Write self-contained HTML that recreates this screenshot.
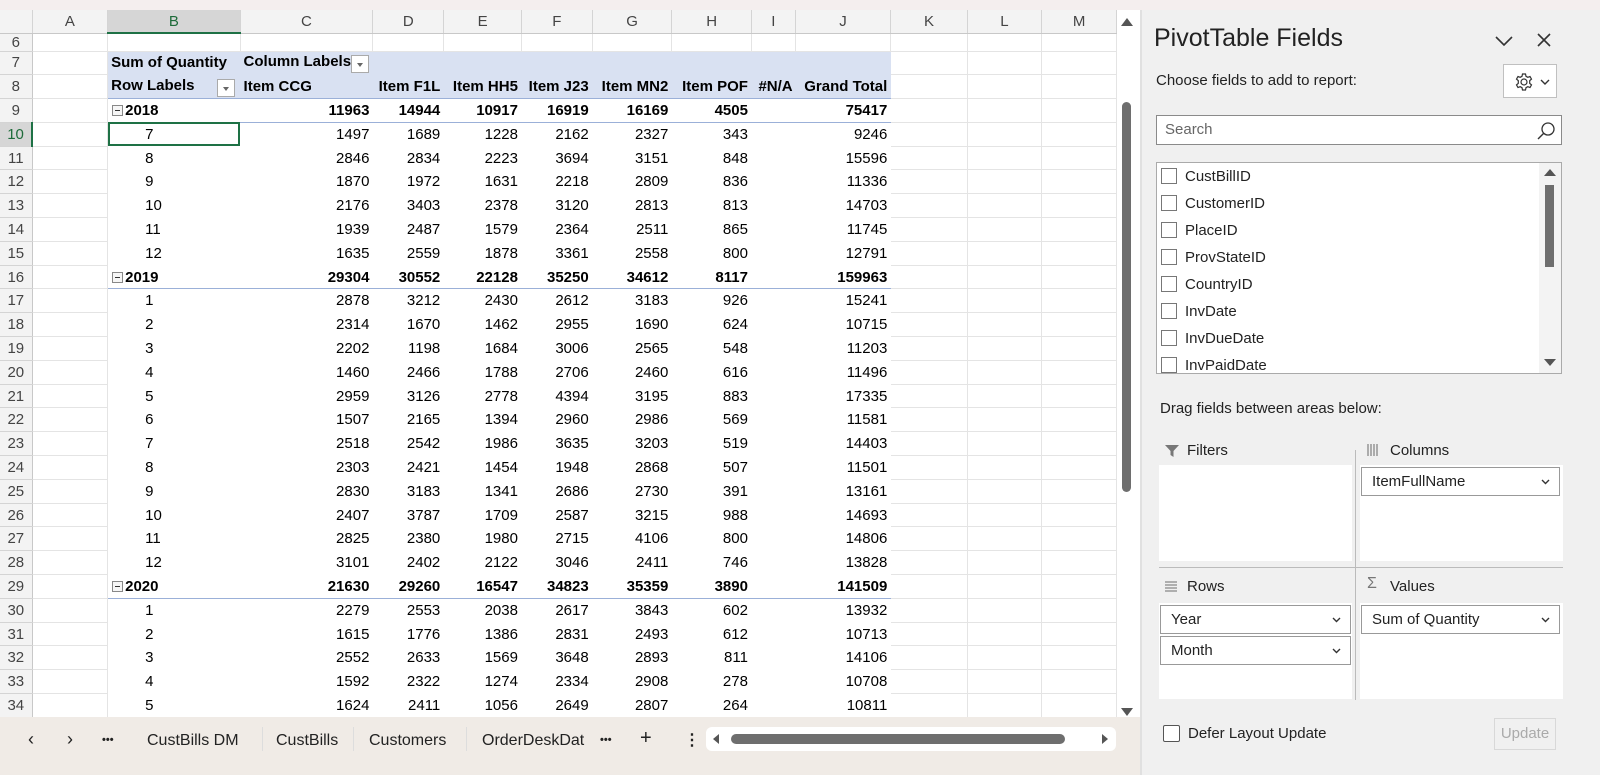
<!DOCTYPE html>
<html><head><meta charset="utf-8">
<style>
*{box-sizing:border-box;margin:0;padding:0}
body{width:1600px;height:775px;overflow:hidden;background:#fff;font-family:"Liberation Sans",Arial,sans-serif;position:relative;color:#000}
.top{position:absolute;left:0;top:0;width:1600px;height:10px;background:#f4eeee}
.grid{position:absolute;left:0;top:10px;width:1117px;height:707px;overflow:hidden;background:#fff}
table{border-collapse:collapse;table-layout:fixed;font-size:15px}
td{height:23.8px;border-right:1px solid #e4e4e4;border-bottom:1px solid #e4e4e4;white-space:nowrap;overflow:hidden;padding:0 3px;text-align:right}
tr.hd td{height:23px;background:#f3f3f3;color:#444;text-align:center;font-size:15px;border-right:1px solid #d4d4d4;border-bottom:1px solid #c8c8c8}
td.rh{background:#f3f3f3;color:#444;text-align:center;font-size:15px;border-right:1px solid #c8c8c8;border-bottom:1px solid #d4d4d4;padding:0}
tr.r6 td{height:16px}
.pv{background:#d9e1f2;border-right-color:#d9e1f2;border-bottom-color:#d9e1f2;font-weight:bold}
.l{text-align:left}
tr.y td.p{font-weight:bold;border-bottom:1px solid #9bb0d8}
tr.y td.p, tr.m td.p{border-right-color:#fff}
tr.m td.p{border-bottom-color:#fff}
.mb{text-align:left;padding-left:37px}
.minus{display:inline-block;width:11px;height:11px;border:1px solid #888;vertical-align:-1px;margin-right:2px;position:relative;background:#f6f6f6}
.minus:after{content:"";position:absolute;left:2px;top:4px;width:5px;height:1px;background:#333}
.dd{display:inline-block;width:18px;height:18px;border:1px solid #aaa;background:#fff;vertical-align:middle;position:relative;float:right;margin-top:2px}
.dd:after{content:"";position:absolute;left:5px;top:7px;border-left:3px solid transparent;border-right:3px solid transparent;border-top:4px solid #666}
.vs{position:absolute;left:1117px;top:10px;width:23px;height:710px;background:#fff}
.tabs{position:absolute;left:0;top:717px;width:1140px;height:58px;background:#f0ebe6;font-size:16px;color:#222}
.tabs span{position:absolute;top:15px}
.panel{position:absolute;left:1140px;top:10px;width:460px;height:765px;background:#f0f0f0;border-left:2px solid #e0e0e0;font-size:15px;color:#222}
.panel .a{position:absolute}
.box{position:absolute;background:#fff;border:1px solid #8a8a8a}
.cb{display:inline-block;width:16px;height:16px;border:1.5px solid #777;background:#fff;vertical-align:-3px;margin-right:8px}
.fld{position:absolute;left:0;height:27px;line-height:27px;padding-left:4px;font-size:15px}
.pill{position:absolute;background:#fff;border:1px solid #999;height:29px;line-height:27px;padding-left:10px;font-size:15px}
.pill svg{position:absolute;right:9px;top:11px}
.area{position:absolute;background:#fff}
</style></head><body>
<div class="top"></div>
<div class="grid">
<table>
<colgroup><col style="width:33px"><col style="width:79px"><col style="width:133px"><col style="width:134px"><col style="width:71px"><col style="width:78px"><col style="width:71px"><col style="width:80px"><col style="width:80px"><col style="width:44px"><col style="width:96px"><col style="width:80px"><col style="width:78px"><col style="width:78px"></colgroup>
<tr class="hd"><td style="background:#f3f3f3"></td><td>A</td><td style="background:#d6d6d6;color:#1e6b3a;border-bottom:2px solid #1e7145">B</td><td>C</td><td>D</td><td>E</td><td>F</td><td>G</td><td>H</td><td>I</td><td>J</td><td>K</td><td>L</td><td>M</td></tr>
<tr class="r6"><td class="rh">6</td><td></td><td></td><td></td><td></td><td></td><td></td><td></td><td></td><td></td><td></td><td></td><td></td><td></td></tr>
<tr><td class="rh">7</td><td></td><td class="pv l">Sum of Quantity</td><td class="pv l">Column Labels<span class="dd"></span></td><td class="pv"></td><td class="pv"></td><td class="pv"></td><td class="pv"></td><td class="pv"></td><td class="pv"></td><td class="pv"></td><td></td><td></td><td></td></tr>
<tr><td class="rh">8</td><td></td><td class="pv l" style="border-bottom:1px solid #9bb0d8">Row Labels<span class="dd" style="margin-right:2px"></span></td><td class="pv l" style="border-bottom:1px solid #9bb0d8">Item CCG</td><td class="pv" style="border-bottom:1px solid #9bb0d8">Item F1L</td><td class="pv" style="border-bottom:1px solid #9bb0d8">Item HH5</td><td class="pv" style="border-bottom:1px solid #9bb0d8">Item J23</td><td class="pv" style="border-bottom:1px solid #9bb0d8">Item MN2</td><td class="pv" style="border-bottom:1px solid #9bb0d8">Item POF</td><td class="pv" style="border-bottom:1px solid #9bb0d8;padding:0 2px">#N/A</td><td class="pv" style="border-bottom:1px solid #9bb0d8">Grand Total</td><td></td><td></td><td></td></tr>
<tr class="y"><td class="rh">9</td><td></td><td class="p l" style="padding-left:4px"><span class="minus"></span>2018</td><td class="p">11963</td><td class="p">14944</td><td class="p">10917</td><td class="p">16919</td><td class="p">16169</td><td class="p">4505</td><td class="p"></td><td class="p">75417</td><td></td><td></td><td></td></tr>
<tr class="m"><td class="rh" style="background:#d6d6d6;color:#1e6b3a;border-right:2px solid #1e7145">10</td><td></td><td class="p mb" style="outline:2px solid #1e7145;outline-offset:-2px">7</td><td class="p">1497</td><td class="p">1689</td><td class="p">1228</td><td class="p">2162</td><td class="p">2327</td><td class="p">343</td><td class="p"></td><td class="p">9246</td><td></td><td></td><td></td></tr>
<tr class="m"><td class="rh">11</td><td></td><td class="p mb">8</td><td class="p">2846</td><td class="p">2834</td><td class="p">2223</td><td class="p">3694</td><td class="p">3151</td><td class="p">848</td><td class="p"></td><td class="p">15596</td><td></td><td></td><td></td></tr>
<tr class="m"><td class="rh">12</td><td></td><td class="p mb">9</td><td class="p">1870</td><td class="p">1972</td><td class="p">1631</td><td class="p">2218</td><td class="p">2809</td><td class="p">836</td><td class="p"></td><td class="p">11336</td><td></td><td></td><td></td></tr>
<tr class="m"><td class="rh">13</td><td></td><td class="p mb">10</td><td class="p">2176</td><td class="p">3403</td><td class="p">2378</td><td class="p">3120</td><td class="p">2813</td><td class="p">813</td><td class="p"></td><td class="p">14703</td><td></td><td></td><td></td></tr>
<tr class="m"><td class="rh">14</td><td></td><td class="p mb">11</td><td class="p">1939</td><td class="p">2487</td><td class="p">1579</td><td class="p">2364</td><td class="p">2511</td><td class="p">865</td><td class="p"></td><td class="p">11745</td><td></td><td></td><td></td></tr>
<tr class="m"><td class="rh">15</td><td></td><td class="p mb">12</td><td class="p">1635</td><td class="p">2559</td><td class="p">1878</td><td class="p">3361</td><td class="p">2558</td><td class="p">800</td><td class="p"></td><td class="p">12791</td><td></td><td></td><td></td></tr>
<tr class="y"><td class="rh">16</td><td></td><td class="p l" style="padding-left:4px"><span class="minus"></span>2019</td><td class="p">29304</td><td class="p">30552</td><td class="p">22128</td><td class="p">35250</td><td class="p">34612</td><td class="p">8117</td><td class="p"></td><td class="p">159963</td><td></td><td></td><td></td></tr>
<tr class="m"><td class="rh">17</td><td></td><td class="p mb">1</td><td class="p">2878</td><td class="p">3212</td><td class="p">2430</td><td class="p">2612</td><td class="p">3183</td><td class="p">926</td><td class="p"></td><td class="p">15241</td><td></td><td></td><td></td></tr>
<tr class="m"><td class="rh">18</td><td></td><td class="p mb">2</td><td class="p">2314</td><td class="p">1670</td><td class="p">1462</td><td class="p">2955</td><td class="p">1690</td><td class="p">624</td><td class="p"></td><td class="p">10715</td><td></td><td></td><td></td></tr>
<tr class="m"><td class="rh">19</td><td></td><td class="p mb">3</td><td class="p">2202</td><td class="p">1198</td><td class="p">1684</td><td class="p">3006</td><td class="p">2565</td><td class="p">548</td><td class="p"></td><td class="p">11203</td><td></td><td></td><td></td></tr>
<tr class="m"><td class="rh">20</td><td></td><td class="p mb">4</td><td class="p">1460</td><td class="p">2466</td><td class="p">1788</td><td class="p">2706</td><td class="p">2460</td><td class="p">616</td><td class="p"></td><td class="p">11496</td><td></td><td></td><td></td></tr>
<tr class="m"><td class="rh">21</td><td></td><td class="p mb">5</td><td class="p">2959</td><td class="p">3126</td><td class="p">2778</td><td class="p">4394</td><td class="p">3195</td><td class="p">883</td><td class="p"></td><td class="p">17335</td><td></td><td></td><td></td></tr>
<tr class="m"><td class="rh">22</td><td></td><td class="p mb">6</td><td class="p">1507</td><td class="p">2165</td><td class="p">1394</td><td class="p">2960</td><td class="p">2986</td><td class="p">569</td><td class="p"></td><td class="p">11581</td><td></td><td></td><td></td></tr>
<tr class="m"><td class="rh">23</td><td></td><td class="p mb">7</td><td class="p">2518</td><td class="p">2542</td><td class="p">1986</td><td class="p">3635</td><td class="p">3203</td><td class="p">519</td><td class="p"></td><td class="p">14403</td><td></td><td></td><td></td></tr>
<tr class="m"><td class="rh">24</td><td></td><td class="p mb">8</td><td class="p">2303</td><td class="p">2421</td><td class="p">1454</td><td class="p">1948</td><td class="p">2868</td><td class="p">507</td><td class="p"></td><td class="p">11501</td><td></td><td></td><td></td></tr>
<tr class="m"><td class="rh">25</td><td></td><td class="p mb">9</td><td class="p">2830</td><td class="p">3183</td><td class="p">1341</td><td class="p">2686</td><td class="p">2730</td><td class="p">391</td><td class="p"></td><td class="p">13161</td><td></td><td></td><td></td></tr>
<tr class="m"><td class="rh">26</td><td></td><td class="p mb">10</td><td class="p">2407</td><td class="p">3787</td><td class="p">1709</td><td class="p">2587</td><td class="p">3215</td><td class="p">988</td><td class="p"></td><td class="p">14693</td><td></td><td></td><td></td></tr>
<tr class="m"><td class="rh">27</td><td></td><td class="p mb">11</td><td class="p">2825</td><td class="p">2380</td><td class="p">1980</td><td class="p">2715</td><td class="p">4106</td><td class="p">800</td><td class="p"></td><td class="p">14806</td><td></td><td></td><td></td></tr>
<tr class="m"><td class="rh">28</td><td></td><td class="p mb">12</td><td class="p">3101</td><td class="p">2402</td><td class="p">2122</td><td class="p">3046</td><td class="p">2411</td><td class="p">746</td><td class="p"></td><td class="p">13828</td><td></td><td></td><td></td></tr>
<tr class="y"><td class="rh">29</td><td></td><td class="p l" style="padding-left:4px"><span class="minus"></span>2020</td><td class="p">21630</td><td class="p">29260</td><td class="p">16547</td><td class="p">34823</td><td class="p">35359</td><td class="p">3890</td><td class="p"></td><td class="p">141509</td><td></td><td></td><td></td></tr>
<tr class="m"><td class="rh">30</td><td></td><td class="p mb">1</td><td class="p">2279</td><td class="p">2553</td><td class="p">2038</td><td class="p">2617</td><td class="p">3843</td><td class="p">602</td><td class="p"></td><td class="p">13932</td><td></td><td></td><td></td></tr>
<tr class="m"><td class="rh">31</td><td></td><td class="p mb">2</td><td class="p">1615</td><td class="p">1776</td><td class="p">1386</td><td class="p">2831</td><td class="p">2493</td><td class="p">612</td><td class="p"></td><td class="p">10713</td><td></td><td></td><td></td></tr>
<tr class="m"><td class="rh">32</td><td></td><td class="p mb">3</td><td class="p">2552</td><td class="p">2633</td><td class="p">1569</td><td class="p">3648</td><td class="p">2893</td><td class="p">811</td><td class="p"></td><td class="p">14106</td><td></td><td></td><td></td></tr>
<tr class="m"><td class="rh">33</td><td></td><td class="p mb">4</td><td class="p">1592</td><td class="p">2322</td><td class="p">1274</td><td class="p">2334</td><td class="p">2908</td><td class="p">278</td><td class="p"></td><td class="p">10708</td><td></td><td></td><td></td></tr>
<tr class="m"><td class="rh">34</td><td></td><td class="p mb">5</td><td class="p">1624</td><td class="p">2411</td><td class="p">1056</td><td class="p">2649</td><td class="p">2807</td><td class="p">264</td><td class="p"></td><td class="p">10811</td><td></td><td></td><td></td></tr>
<tr class="m"><td class="rh">35</td><td></td><td class="p mb">6</td><td class="p">1778</td><td class="p">2360</td><td class="p">1518</td><td class="p">2553</td><td class="p">2873</td><td class="p">883</td><td class="p"></td><td class="p">12264</td><td></td><td></td><td></td></tr>
</table>
</div>
<div class="vs">
<div style="position:absolute;left:4px;top:8px;border-left:6px solid transparent;border-right:6px solid transparent;border-bottom:8px solid #555"></div>
<div style="position:absolute;left:5px;top:92px;width:9px;height:390px;background:#6e6e6e;border-radius:5px"></div>
<div style="position:absolute;left:4px;top:698px;border-left:6px solid transparent;border-right:6px solid transparent;border-top:8px solid #555"></div>
</div>
<div class="tabs">
<span style="left:28px;font-size:18px;top:12px">&#8249;</span>
<span style="left:67px;font-size:18px;top:12px">&#8250;</span>
<span style="left:102px;font-size:11px;top:17px;font-weight:bold">&#8226;&#8226;&#8226;</span>
<span style="left:147px">CustBills DM</span>
<span style="left:262px;top:10px;height:24px;border-left:1px solid #ddd"></span>
<span style="left:276px">CustBills</span>
<span style="left:353px;top:10px;height:24px;border-left:1px solid #ddd"></span>
<span style="left:369px">Customers</span>
<span style="left:466px;top:10px;height:24px;border-left:1px solid #ddd"></span>
<span style="left:482px">OrderDeskDat</span>
<span style="left:600px;font-size:11px;top:17px;font-weight:bold">&#8226;&#8226;&#8226;</span>
<span style="left:640px;font-size:20px;top:10px">+</span>
<span style="left:684px;font-weight:bold;top:13px">&#8942;</span>
<div style="position:absolute;left:706px;top:10px;width:410px;height:24px;background:#fff;border-radius:6px"></div>
<div style="position:absolute;left:713px;top:17px;border-top:5px solid transparent;border-bottom:5px solid transparent;border-right:6px solid #555"></div>
<div style="position:absolute;left:731px;top:17px;width:334px;height:10px;background:#6e6e6e;border-radius:5px"></div>
<div style="position:absolute;left:1102px;top:17px;border-top:5px solid transparent;border-bottom:5px solid transparent;border-left:6px solid #555"></div>
</div>
<div class="panel">
<div class="a" style="left:12px;top:14px;font-size:25px;color:#222">PivotTable Fields</div>
<svg class="a" style="left:352px;top:24px" width="20" height="14"><path d="M2 3 L10 11 L18 3" stroke="#333" stroke-width="1.6" fill="none"/></svg>
<svg class="a" style="left:394px;top:22px" width="16" height="16"><path d="M2 2 L14 14 M14 2 L2 14" stroke="#333" stroke-width="1.6"/></svg>
<div class="a" style="left:14px;top:62px">Choose fields to add to report:</div>
<div class="a" style="left:361px;top:54px;width:54px;height:34px;background:#fff;border:1px solid #c0c0c0">
<svg style="position:absolute;left:10px;top:7px" width="20" height="20" viewBox="0 0 20 20"><path d="M8.5 2h3l.5 2.3 1.8 1 2.2-.8 1.5 2.6-1.8 1.6v2.6l1.8 1.6-1.5 2.6-2.2-.8-1.8 1L11.5 18h-3L8 15.7l-1.8-1-2.2.8-1.5-2.6 1.8-1.6V8.7L2.5 7.1 4 4.5l2.2.8 1.8-1z" fill="none" stroke="#333" stroke-width="1.2"/><circle cx="10" cy="10" r="3" fill="none" stroke="#333" stroke-width="1.2"/></svg>
<svg style="position:absolute;left:36px;top:14px" width="10" height="7"><path d="M1 1 L5 5 L9 1" stroke="#333" stroke-width="1.4" fill="none"/></svg>
</div>
<div class="box" style="left:14px;top:105px;width:406px;height:30px;border-color:#8a8a8a"><span style="position:absolute;left:8px;top:5px;color:#666;font-size:15px">Search</span>
<svg style="position:absolute;right:4px;top:4px" width="22" height="22"><circle cx="13" cy="9" r="6" fill="none" stroke="#333" stroke-width="1.3"/><path d="M8.5 13.5 L3 19" stroke="#333" stroke-width="1.4"/></svg></div>
<div class="box" style="left:14px;top:152px;width:406px;height:212px;border-color:#aaa;overflow:hidden">
<div class="fld" style="top:0"><span class="cb"></span>CustBillID</div>
<div class="fld" style="top:27px"><span class="cb"></span>CustomerID</div>
<div class="fld" style="top:54px"><span class="cb"></span>PlaceID</div>
<div class="fld" style="top:81px"><span class="cb"></span>ProvStateID</div>
<div class="fld" style="top:108px"><span class="cb"></span>CountryID</div>
<div class="fld" style="top:135px"><span class="cb"></span>InvDate</div>
<div class="fld" style="top:162px"><span class="cb"></span>InvDueDate</div>
<div class="fld" style="top:189px"><span class="cb"></span>InvPaidDate</div>
<div style="position:absolute;right:0;top:0;width:22px;height:212px;background:#f3f3f3"></div>
<div style="position:absolute;right:5px;top:6px;border-left:6px solid transparent;border-right:6px solid transparent;border-bottom:7px solid #555"></div>
<div style="position:absolute;right:7px;top:22px;width:9px;height:82px;background:#6e6e6e"></div>
<div style="position:absolute;right:5px;top:196px;border-left:6px solid transparent;border-right:6px solid transparent;border-top:7px solid #555"></div>
</div>
<div class="a" style="left:18px;top:390px">Drag fields between areas below:</div>
<svg class="a" style="left:22px;top:433px" width="16" height="16"><path d="M1 2 H15 L9.5 8 V14 L6.5 12 V8 Z" fill="#777"/></svg>
<div class="a" style="left:45px;top:432px">Filters</div>
<svg class="a" style="left:225px;top:433px" width="14" height="14"><path d="M1 1v12M4 1v12M7 1v12M10 1v12" stroke="#888" stroke-width="1.3"/></svg>
<div class="a" style="left:248px;top:432px">Columns</div>
<div class="area" style="left:17px;top:455px;width:193px;height:96px"></div>
<div class="area" style="left:218px;top:455px;width:203px;height:96px"></div>
<div class="pill" style="left:219px;top:457px;width:199px">ItemFullName<svg width="9" height="6"><path d="M1 1 L4.5 4.5 L8 1" stroke="#333" stroke-width="1.4" fill="none"/></svg></div>
<div class="a" style="left:213px;top:440px;width:1px;height:250px;background:#bbb"></div>
<div class="a" style="left:17px;top:557px;width:404px;height:1px;background:#bbb"></div>
<svg class="a" style="left:22px;top:571px" width="14" height="12"><path d="M1 1h12M1 4h12M1 7h12M1 10h12" stroke="#888" stroke-width="1.2"/></svg>
<div class="a" style="left:45px;top:568px">Rows</div>
<div class="a" style="left:225px;top:565px;font-size:16px;color:#777">&Sigma;</div>
<div class="a" style="left:248px;top:568px">Values</div>
<div class="area" style="left:17px;top:593px;width:193px;height:96px"></div>
<div class="area" style="left:218px;top:593px;width:203px;height:96px"></div>
<div class="pill" style="left:18px;top:595px;width:191px">Year<svg width="9" height="6"><path d="M1 1 L4.5 4.5 L8 1" stroke="#333" stroke-width="1.4" fill="none"/></svg></div>
<div class="pill" style="left:18px;top:626px;width:191px">Month<svg width="9" height="6"><path d="M1 1 L4.5 4.5 L8 1" stroke="#333" stroke-width="1.4" fill="none"/></svg></div>
<div class="pill" style="left:219px;top:595px;width:199px">Sum of Quantity<svg width="9" height="6"><path d="M1 1 L4.5 4.5 L8 1" stroke="#333" stroke-width="1.4" fill="none"/></svg></div>
<div class="a" style="left:21px;top:715px;width:17px;height:17px;border:1.5px solid #555;background:#fff;border-radius:2px"></div>
<div class="a" style="left:46px;top:715px">Defer Layout Update</div>
<div class="a" style="left:352px;top:708px;width:62px;height:32px;border:1px solid #d8d8d8;color:#aaa;text-align:center;line-height:30px">Update</div>
</div>
</body></html>
